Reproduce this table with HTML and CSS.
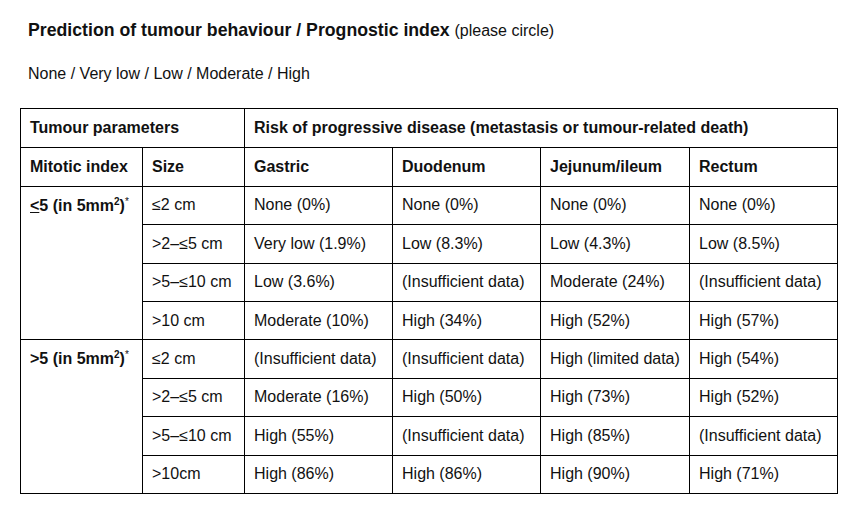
FILE: index.html
```html
<!DOCTYPE html>
<html>
<head>
<meta charset="utf-8">
<link rel="stylesheet" href="styles.css">
</head>
<body>
<div class="page">
  <h1 class="title">Prediction of tumour behaviour / Prognostic index <span class="note">(please circle)</span></h1>
  <p class="options">None / Very low / Low / Moderate / High</p>
  <table class="risk">
    <colgroup>
      <col class="c1"><col class="c2"><col class="c3"><col class="c4"><col class="c5"><col class="c6">
    </colgroup>
    <tr class="head">
      <th colspan="2">Tumour parameters</th>
      <th colspan="4">Risk of progressive disease (metastasis or tumour-related death)</th>
    </tr>
    <tr class="head">
      <th>Mitotic index</th><th>Size</th><th>Gastric</th><th>Duodenum</th><th>Jejunum/ileum</th><th>Rectum</th>
    </tr>
    <tr>
      <th rowspan="4" class="mi"><u>&lt;</u>5 (in 5mm<sup>2</sup>)<sup class="ast">*</sup></th>
      <td>≤2 cm</td><td>None (0%)</td><td>None (0%)</td><td>None (0%)</td><td>None (0%)</td>
    </tr>
    <tr>
      <td>&gt;2–≤5 cm</td><td>Very low (1.9%)</td><td>Low (8.3%)</td><td>Low (4.3%)</td><td>Low (8.5%)</td>
    </tr>
    <tr>
      <td>&gt;5–≤10 cm</td><td>Low (3.6%)</td><td>(Insufficient data)</td><td>Moderate (24%)</td><td>(Insufficient data)</td>
    </tr>
    <tr>
      <td>&gt;10 cm</td><td>Moderate (10%)</td><td>High (34%)</td><td>High (52%)</td><td>High (57%)</td>
    </tr>
    <tr>
      <th rowspan="4" class="mi">&gt;5 (in 5mm<sup>2</sup>)<sup class="ast">*</sup></th>
      <td>≤2 cm</td><td>(Insufficient data)</td><td>(Insufficient data)</td><td>High (limited data)</td><td>High (54%)</td>
    </tr>
    <tr>
      <td>&gt;2–≤5 cm</td><td>Moderate (16%)</td><td>High (50%)</td><td>High (73%)</td><td>High (52%)</td>
    </tr>
    <tr>
      <td>&gt;5–≤10 cm</td><td>High (55%)</td><td>(Insufficient data)</td><td>High (85%)</td><td>(Insufficient data)</td>
    </tr>
    <tr>
      <td>&gt;10cm</td><td>High (86%)</td><td>High (86%)</td><td>High (90%)</td><td>High (71%)</td>
    </tr>
  </table>
</div>
</body>
</html>
```
FILE: styles.css
```css
html, body {
  margin: 0;
  padding: 0;
  background: #ffffff;
}
body {
  font-family: "Liberation Sans", Arial, sans-serif;
  color: #111111;
}
.page {
  padding: 20px 0 0 28px;
}
.title {
  margin: 0;
  font-size: 17.7px;
  line-height: 20px;
  font-weight: bold;
}
.title .note {
  font-weight: normal;
  font-size: 16px;
}
.options {
  margin: 23px 0 0 0;
  font-size: 16px;
  line-height: 20px;
}
.risk {
  margin: 24px 0 0 -8px;
  border-collapse: collapse;
  table-layout: fixed;
  width: 817px;
  font-size: 16px;
}
.c1 { width: 122px; }
.c2 { width: 102px; }
.c3 { width: 148px; }
.c4 { width: 148px; }
.c5 { width: 149px; }
.c6 { width: 148px; }
.risk tr {
  height: 38.4px;
}
.risk tr.head {
  height: 38.9px;
}
.risk th, .risk td {
  border: 1px solid #000000;
  padding: 0 0 0 9px;
  text-align: left;
  vertical-align: middle;
  white-space: nowrap;
  line-height: 18px;
}
.risk th {
  font-weight: bold;
}
.risk th.mi {
  vertical-align: top;
  padding-top: 10px;
}
.risk sup {
  font-size: 10px;
  line-height: 0;
  vertical-align: 6px;
}
.risk sup.ast {
  font-weight: normal;
}
```
